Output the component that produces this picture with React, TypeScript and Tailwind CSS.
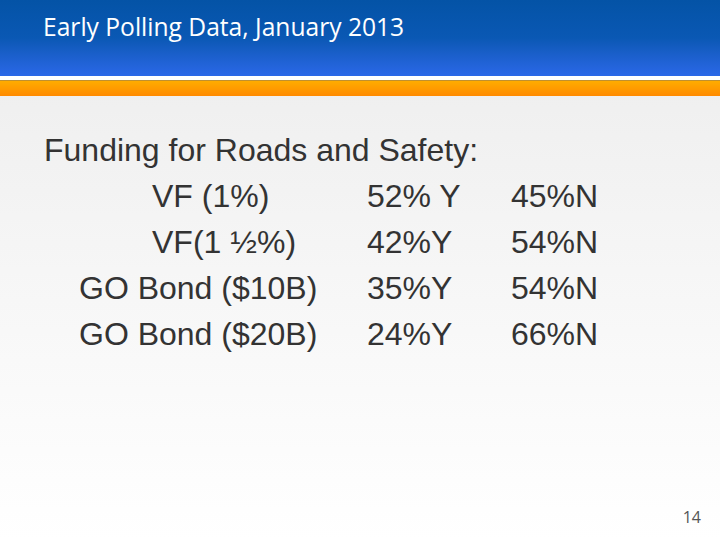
const rows = [
  { label: "VF (1%)", pad: "pl-[108px]", y: "52% Y", n: "45%N" },
  { label: "VF(1 ½%)", pad: "pl-[108px]", y: "42%Y", n: "54%N" },
  { label: "GO Bond ($10B)", pad: "pl-[35px]", y: "35%Y", n: "54%N" },
  { label: "GO Bond ($20B)", pad: "pl-[35px]", y: "24%Y", n: "66%N" },
];

export default function App() {
  return (
    <div className="w-[720px] h-[540px] flex flex-col overflow-hidden bg-gradient-to-b from-[#ececec] via-[#f6f6f6] to-white">
      <div className="h-[76px] shrink-0 bg-gradient-to-b from-[#0453a6] via-[#0a58b4] to-[#2a68e8] px-[43px] pt-[10px]">
        <h1 className="text-white text-[24.6px] leading-[34px] font-['Open_Sans',sans-serif]">
          Early Polling Data, January 2013
        </h1>
      </div>
      <div className="h-[4px] shrink-0 bg-white" />
      <div className="h-[16px] shrink-0 border-t border-[#c09030] bg-gradient-to-b from-[#ffac00] to-[#ff8a00]" />

      <div className="flex-1 flex flex-col pl-[44px] pt-[31px] text-[#333333] text-[32px] leading-[46px] font-['Liberation_Sans',Arial,sans-serif]">
        <div>Funding for Roads and Safety:</div>
        {rows.map((r) => (
          <div key={r.label} className="grid grid-cols-[323px_144px_auto]">
            <span className={r.pad}>{r.label}</span>
            <span>{r.y}</span>
            <span>{r.n}</span>
          </div>
        ))}
        <div className="flex-1" />
        <div className="self-end pr-[19px] pb-[12px] text-[16px] leading-[22px] text-[#555555] font-['Open_Sans',sans-serif]">
          14
        </div>
      </div>
    </div>
  );
}
